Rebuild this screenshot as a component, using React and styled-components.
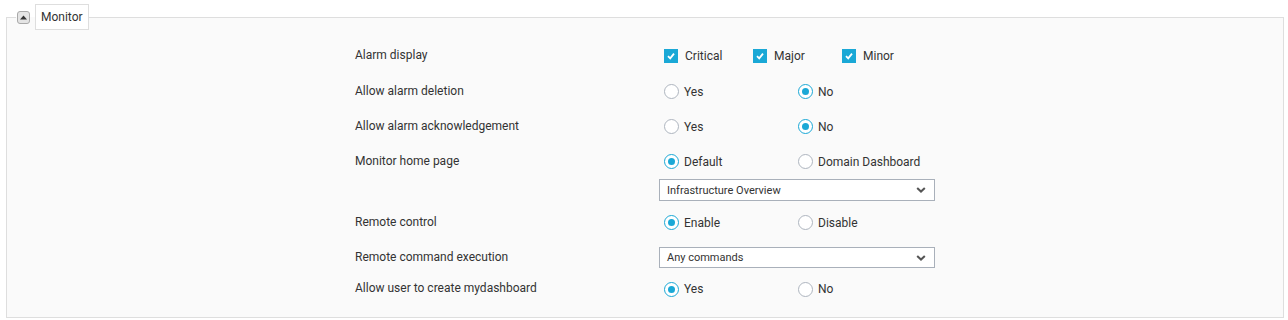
import React from 'react'
import styled, { createGlobalStyle } from 'styled-components'

const GlobalStyle = createGlobalStyle`
  body {
    margin: 0;
    background: #fff;
    font-family: Roboto, "Liberation Sans", Arial, sans-serif;
    color: #333;
  }
`;

const Page = styled.div`
  padding: 4px 4px 0 6px;
`;

const Fieldset = styled.fieldset`
  margin: 0;
  padding: 0 0 14px;
  border: 1px solid #dedede;
  background: #fafafa;
  min-width: 0;
`;

const Legend = styled.legend`
  display: flex;
  align-items: center;
  gap: 5px;
  margin-left: 9px;
  padding: 0 0 0 1px;
`;

const Toggle = styled.button`
  all: unset;
  box-sizing: border-box;
  width: 13px;
  height: 13px;
  border: 1px solid #a9a9a9;
  border-radius: 3px;
  background: #e4e4e4;
  display: flex;
  align-items: center;
  justify-content: center;
  cursor: pointer;
`;

const LegendTitle = styled.span`
  display: flex;
  align-items: center;
  height: 24px;
  padding: 0 5px;
  border: 1px solid #dedede;
  background: #fff;
  font-size: 12px;
  color: #333;
`;

const Form = styled.div`
  width: 580px;
  margin: 0 auto;
  padding-top: 7px;
`;

const Row = styled.div`
  display: grid;
  grid-template-columns: 304px 276px;
  align-items: start;
`;

const Label = styled.div`
  display: flex;
  align-items: center;
  height: ${(p) => p.$h || 35}px;
  padding-bottom: 2px;
  box-sizing: border-box;
  font-size: 12px;
  color: #333;
`;

const Controls = styled.div`
  display: flex;
  flex-direction: column;
`;

const OptionLine = styled.div`
  display: flex;
  align-items: center;
  height: ${(p) => p.$h || 35}px;
  padding-left: 5px;
`;

const Option = styled.label`
  display: flex;
  align-items: center;
  gap: ${(p) => p.$gap}px;
  width: ${(p) => p.$w}px;
  font-size: 12px;
  color: #333;
  cursor: pointer;
`;

const Box = styled.span`
  width: 14px;
  height: 14px;
  background: #1aa8d6;
  display: flex;
  align-items: center;
  justify-content: center;
  flex-shrink: 0;
`;

const Circle = styled.span`
  box-sizing: border-box;
  width: 15px;
  height: 15px;
  border-radius: 50%;
  background: #fff;
  border: ${(p) => (p.$on ? '1.5px solid #1aa8d6' : '1px solid #aeb5bf')};
  display: flex;
  align-items: center;
  justify-content: center;
  flex-shrink: 0;
  &::after {
    content: '';
    display: ${(p) => (p.$on ? 'block' : 'none')};
    width: 7px;
    height: 7px;
    border-radius: 50%;
    background: #1aa8d6;
  }
`;

const Select = styled.div`
  box-sizing: border-box;
  display: flex;
  align-items: center;
  justify-content: space-between;
  height: ${(p) => p.$h || 22}px;
  margin-top: ${(p) => p.$mt || 0}px;
  margin-bottom: ${(p) => p.$mb || 0}px;
  padding: 0 8px 0 7px;
  border: 1px solid #a9b0ba;
  background: #fff;
  font-size: 11px;
  color: #333;
`;

function Check({ label }) {
  return (
    <Option $w={89} $gap={7}>
      <Box>
        <svg width="10" height="10" viewBox="0 0 10 10">
          <path d="M2 5.2 L4.2 7.4 L8 2.6" fill="none" stroke="#fff" strokeWidth="1.8" />
        </svg>
      </Box>
      {label}
    </Option>
  );
}

function Radio({ label, on }) {
  return (
    <Option $w={134} $gap={5}>
      <Circle $on={on} />
      {label}
    </Option>
  );
}

function Dropdown({ value, ...rest }) {
  return (
    <Select {...rest}>
      {value}
      <svg width="10" height="6" viewBox="0 0 10 6">
        <path d="M1.2 1 L5 4.6 L8.8 1" fill="none" stroke="#555" strokeWidth="2" />
      </svg>
    </Select>
  );
}

function App() {
  return (
    <Page>
      <GlobalStyle />
      <Fieldset>
        <Legend>
          <Toggle>
            <svg width="7" height="5" viewBox="0 0 7 5">
              <path d="M0 4.5 L3.5 0.5 L7 4.5 Z" fill="#333" />
            </svg>
          </Toggle>
          <LegendTitle>Monitor</LegendTitle>
        </Legend>
        <Form>
          <Row>
            <Label $h={37}>Alarm display</Label>
            <Controls>
              <OptionLine $h={37}>
                <Check label="Critical" />
                <Check label="Major" />
                <Check label="Minor" />
              </OptionLine>
            </Controls>
          </Row>
          <Row>
            <Label>Allow alarm deletion</Label>
            <Controls>
              <OptionLine>
                <Radio label="Yes" />
                <Radio label="No" on />
              </OptionLine>
            </Controls>
          </Row>
          <Row>
            <Label>Allow alarm acknowledgement</Label>
            <Controls>
              <OptionLine>
                <Radio label="Yes" />
                <Radio label="No" on />
              </OptionLine>
            </Controls>
          </Row>
          <Row>
            <Label>Monitor home page</Label>
            <Controls>
              <OptionLine>
                <Radio label="Default" on />
                <Radio label="Domain Dashboard" />
              </OptionLine>
              <Dropdown value="Infrastructure Overview" $mb={4} />
            </Controls>
          </Row>
          <Row>
            <Label>Remote control</Label>
            <Controls>
              <OptionLine>
                <Radio label="Enable" on />
                <Radio label="Disable" />
              </OptionLine>
            </Controls>
          </Row>
          <Row>
            <Label>Remote command execution</Label>
            <Controls>
              <Dropdown value="Any commands" $h={21} $mt={7} />
            </Controls>
          </Row>
          <Row>
            <Label $h={28}>Allow user to create mydashboard</Label>
            <Controls>
              <OptionLine $h={28}>
                <Radio label="Yes" on />
                <Radio label="No" />
              </OptionLine>
            </Controls>
          </Row>
        </Form>
      </Fieldset>
    </Page>
  );
}

export default App
